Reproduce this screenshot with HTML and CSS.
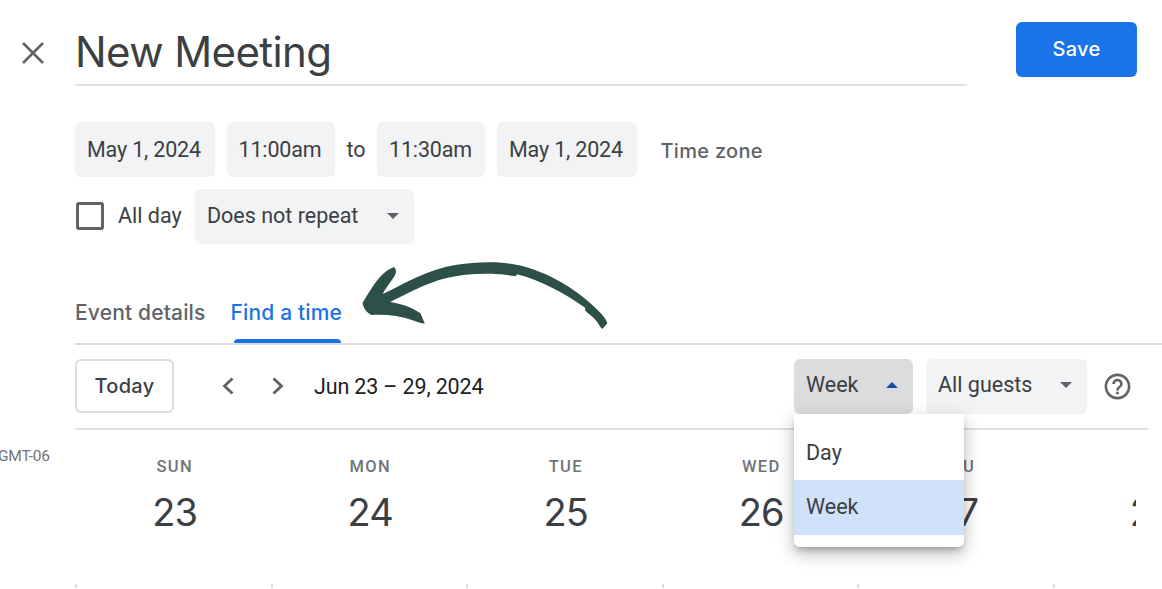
FILE: index.html
```html
<!DOCTYPE html>
<html lang="en">
<head>
    <meta charset="UTF-8">
    <meta name="viewport" content="width=device-width, initial-scale=1.0">
    <title>New Meeting</title>
    <link rel="stylesheet" href="styles.css">
</head>
<body>
    <div class="page">
        <header class="header">
            <svg class="close" viewBox="0 0 22 22"><path d="M1 1L21 21M21 1L1 21"/></svg>
            <h1 class="title">New Meeting</h1>
            <button class="save">Save</button>
        </header>

        <div class="row dates">
            <span class="chip date">May 1, 2024</span>
            <span class="chip time">11:00am</span>
            <span class="to">to</span>
            <span class="chip time">11:30am</span>
            <span class="chip date">May 1, 2024</span>
            <a class="timezone">Time zone</a>
        </div>

        <div class="row options">
            <span class="checkbox"></span>
            <span class="all-day">All day</span>
            <div class="chip select repeat">Does not repeat <i class="caret"></i></div>
        </div>

        <nav class="tabs">
            <a class="tab">Event details</a>
            <a class="tab active">Find a time</a>
            <!-- hand drawn arrow over the tabs -->
            <svg class="arrow" viewBox="0 0 870 300">
                <path d="M162 51C169 57 170 68 163 79C151 99 136 115 128 132C190 102 265 57 350 44C415 34 475 34 529 44C625 63 719 123 781 188C793 201 800 210 802 220L787 237C778 229 776 219 766 209C756 198 743 191 735 181L736 174C680 135 610 93 531 73L527 79C510 74 493 76 476 73C420 69 365 74 320 84C258 99 202 131 150 156C184 161 216 172 241 190C247 199 247 209 255 220C243 222 232 215 218 211C178 196 137 193 94 195C80 187 69 174 68 158C82 136 100 104 119 82C132 67 147 57 162 51Z"/>
            </svg>
        </nav>

        <div class="toolbar">
            <button class="today">Today</button>
            <svg class="chevron prev" viewBox="0 0 12 18"><path d="M10.500 1.500L2.500 9L10.500 16.500"/></svg>
            <svg class="chevron next" viewBox="0 0 12 18"><path d="M1.500 1.500L9.500 9L1.500 16.500"/></svg>
            <span class="range">Jun 23 – 29, 2024</span>
            <div class="view">
                <div class="chip select open">Week <i class="caret up"></i></div>
                <div class="menu">
                    <div class="item">Day</div>
                    <div class="item selected">Week</div>
                </div>
            </div>
            <div class="chip select guests">All guests <i class="caret"></i></div>
            <svg class="help" viewBox="0 0 24 24"><path d="M11 18h2v-2h-2v2zm1-16C6.480 2 2 6.480 2 12s4.480 10 10 10 10-4.480 10-10S17.520 2 12 2zm0 18c-4.410 0-8-3.590-8-8s3.590-8 8-8 8 3.590 8 8-3.590 8-8 8zm0-14c-2.210 0-4 1.790-4 4h2c0-1.100.9-2 2-2s2 .9 2 2c0 2-3 1.750-3 5h2c0-2.250 3-2.500 3-5 0-2.210-1.790-4-4-4z"/></svg>
        </div>

        <div class="calendar">
            <div class="gmt">GMT-06</div>
            <div class="days">
                <div class="day"><span class="name">SUN</span><span class="num">23</span></div>
                <div class="day"><span class="name">MON</span><span class="num">24</span></div>
                <div class="day"><span class="name">TUE</span><span class="num">25</span></div>
                <div class="day"><span class="name">WED</span><span class="num">26</span></div>
                <div class="day"><span class="name">THU</span><span class="num">27</span></div>
                <div class="day last"><span class="num">28</span></div>
            </div>
        </div>
    </div>
</body>
</html>
```
FILE: styles.css
```css
* {
    box-sizing: border-box;
}
html, body {
    height: 100%;
    margin: 0;
}
body {
    overflow: hidden;
    background: #fff;
    color: #3c4043;
    font-family: Roboto, sans-serif;
    font-size: 21.5px;
}
.page {
    width: 1162px;
    height: 589px;
    overflow: hidden;
}
.header {
    display: flex;
    align-items: flex-start;
    height: 122px;
    padding: 22px 25px 0 22px;
}
.close {
    width: 22px;
    height: 22px;
    margin: 20px 31px 0 0;
    fill: none;
    stroke: #5f6368;
    stroke-width: 2.5;
}
.title {
    width: 892px;
    height: 64px;
    margin: 0;
    border-bottom: 2px solid #e0e0e0;
    font-family: Inter, sans-serif;
    font-size: 42px;
    font-weight: 400;
    line-height: 60px;
    letter-spacing: -0.6px;
}
.save {
    width: 121px;
    height: 55px;
    margin-left: auto;
    padding: 0 0 2px;
    border: none;
    border-radius: 6px;
    background: #1a73e8;
    color: #fff;
    font-family: Inter, sans-serif;
    font-size: 20px;
    font-weight: 500;
    letter-spacing: 0.3px;
}
.row {
    display: flex;
    align-items: center;
    padding-left: 75px;
}
.dates {
    gap: 12px;
    height: 55px;
}
.chip {
    height: 55px;
    padding: 0 12px;
    border-radius: 6px;
    background: #f1f3f4;
    line-height: 54px;
    white-space: nowrap;
}
.date {
    width: 139.5px;
    line-height: 56px;
    letter-spacing: -0.17px;
}
.time {
    width: 108px;
    line-height: 56px;
    letter-spacing: -0.15px;
}
.to {
    width: 18.5px;
}
.timezone {
    margin-left: 12px;
    padding-top: 2px;
    color: #5f6368;
    font-family: Inter, sans-serif;
    font-size: 20px;
    font-weight: 500;
    letter-spacing: 0.3px;
}
.options {
    margin-top: 12px;
}
.checkbox {
    width: 28px;
    height: 28px;
    margin: 0 0 1px 1px;
    border: 3px solid #5f6368;
    border-radius: 3px;
}
.all-day {
    width: 77px;
    margin: 0 0 2px 14px;
}
.select {
    display: flex;
    justify-content: space-between;
    align-items: center;
    padding-bottom: 2px;
}
.repeat {
    width: 219px;
}
.caret {
    border: 6.5px solid transparent;
    border-top-color: #5f6368;
    border-bottom: none;
    margin-right: 3px;
}
.caret.up {
    border-top: none;
    border-bottom: 6.5px solid #174ea6;
}
.tabs {
    position: relative;
    display: flex;
    gap: 25px;
    height: 101px;
    margin-left: 75px;
    padding-top: 54px;
    border-bottom: 2px solid #dadce0;
    font-family: Inter, sans-serif;
    font-size: 21px;
    font-weight: 500;
}
.tab {
    height: 45px;
    color: #5f6368;
    line-height: 30px;
    letter-spacing: 0.16px;
    white-space: nowrap;
}
.tab.active {
    color: #1a73e8;
}
.tab.active::after {
    content: "";
    display: block;
    width: 107px;
    height: 4px;
    margin: 11px 0 0 3px;
    border-radius: 4px 4px 0 0;
    background: #1a73e8;
}
.arrow {
    position: absolute;
    left: 265px;
    top: 6px;
    width: 290px;
    height: 100px;
    fill: #2c4f47;
}
.toolbar {
    display: flex;
    align-items: center;
    width: 1073px;
    height: 85px;
    margin-left: 75px;
    padding-bottom: 1px;
    border-bottom: 2px solid #dfe0e6;
}
.today {
    width: 99px;
    height: 54px;
    padding: 0 0 1px;
    border: 2px solid #dadce0;
    border-radius: 6px;
    background: #fff;
    color: #3c4043;
    font-family: Inter, sans-serif;
    font-size: 20px;
    font-weight: 500;
    letter-spacing: 0.3px;
}
.chevron {
    width: 12px;
    height: 18px;
    fill: none;
    stroke: #5f6368;
    stroke-width: 2.8;
}
.prev {
    margin-left: 48px;
}
.next {
    margin-left: 38px;
}
.range {
    margin-left: 30px;
    color: #202124;
    letter-spacing: -0.15px;
}
.view {
    position: relative;
    margin-left: auto;
}
.open {
    width: 119px;
    background: #dadcde;
}
.menu {
    position: absolute;
    left: 0;
    top: 55px;
    z-index: 1;
    width: 170px;
    height: 133px;
    padding-top: 12px;
    border-radius: 0 0 6px 6px;
    background: #fff;
    box-shadow: 0 8px 15px 1px rgba(0, 0, 0, 0.14), 0 4px 21px 3px rgba(0, 0, 0, 0.08), 0 5px 7px -3px rgba(0, 0, 0, 0.3);
}
.item {
    height: 54.5px;
    padding-left: 12px;
    line-height: 54px;
}
.item.selected {
    background: #d0e1fa;
}
.guests {
    width: 161px;
    margin-left: 13px;
}
.help {
    width: 31px;
    height: 31px;
    margin: 0 15px;
    fill: #5f6368;
}
.calendar {
    display: flex;
}
.gmt {
    flex: none;
    width: 75px;
    margin-left: -2px;
    padding-top: 17px;
    color: #70757a;
    font-size: 15.5px;
    letter-spacing: -0.2px;
}
.days {
    display: flex;
    width: 1063px;
    height: 158px;
    overflow: hidden;
}
.day {
    flex: none;
    display: flex;
    flex-direction: column;
    align-items: center;
    width: 195.5px;
    padding: 26px 0 0 8px;
    background: linear-gradient(#dadce0, #dadce0) 2px 100% / 2px 4px no-repeat;
}
.name {
    height: 21px;
    color: #70757a;
    font-size: 16.5px;
    font-weight: 500;
    line-height: 21px;
    letter-spacing: 1.3px;
}
.num {
    margin-top: 11px;
    font-family: Inter, sans-serif;
    font-size: 38px;
    line-height: 48px;
    letter-spacing: -0.8px;
}
.last {
    padding-top: 47px;
}
```
